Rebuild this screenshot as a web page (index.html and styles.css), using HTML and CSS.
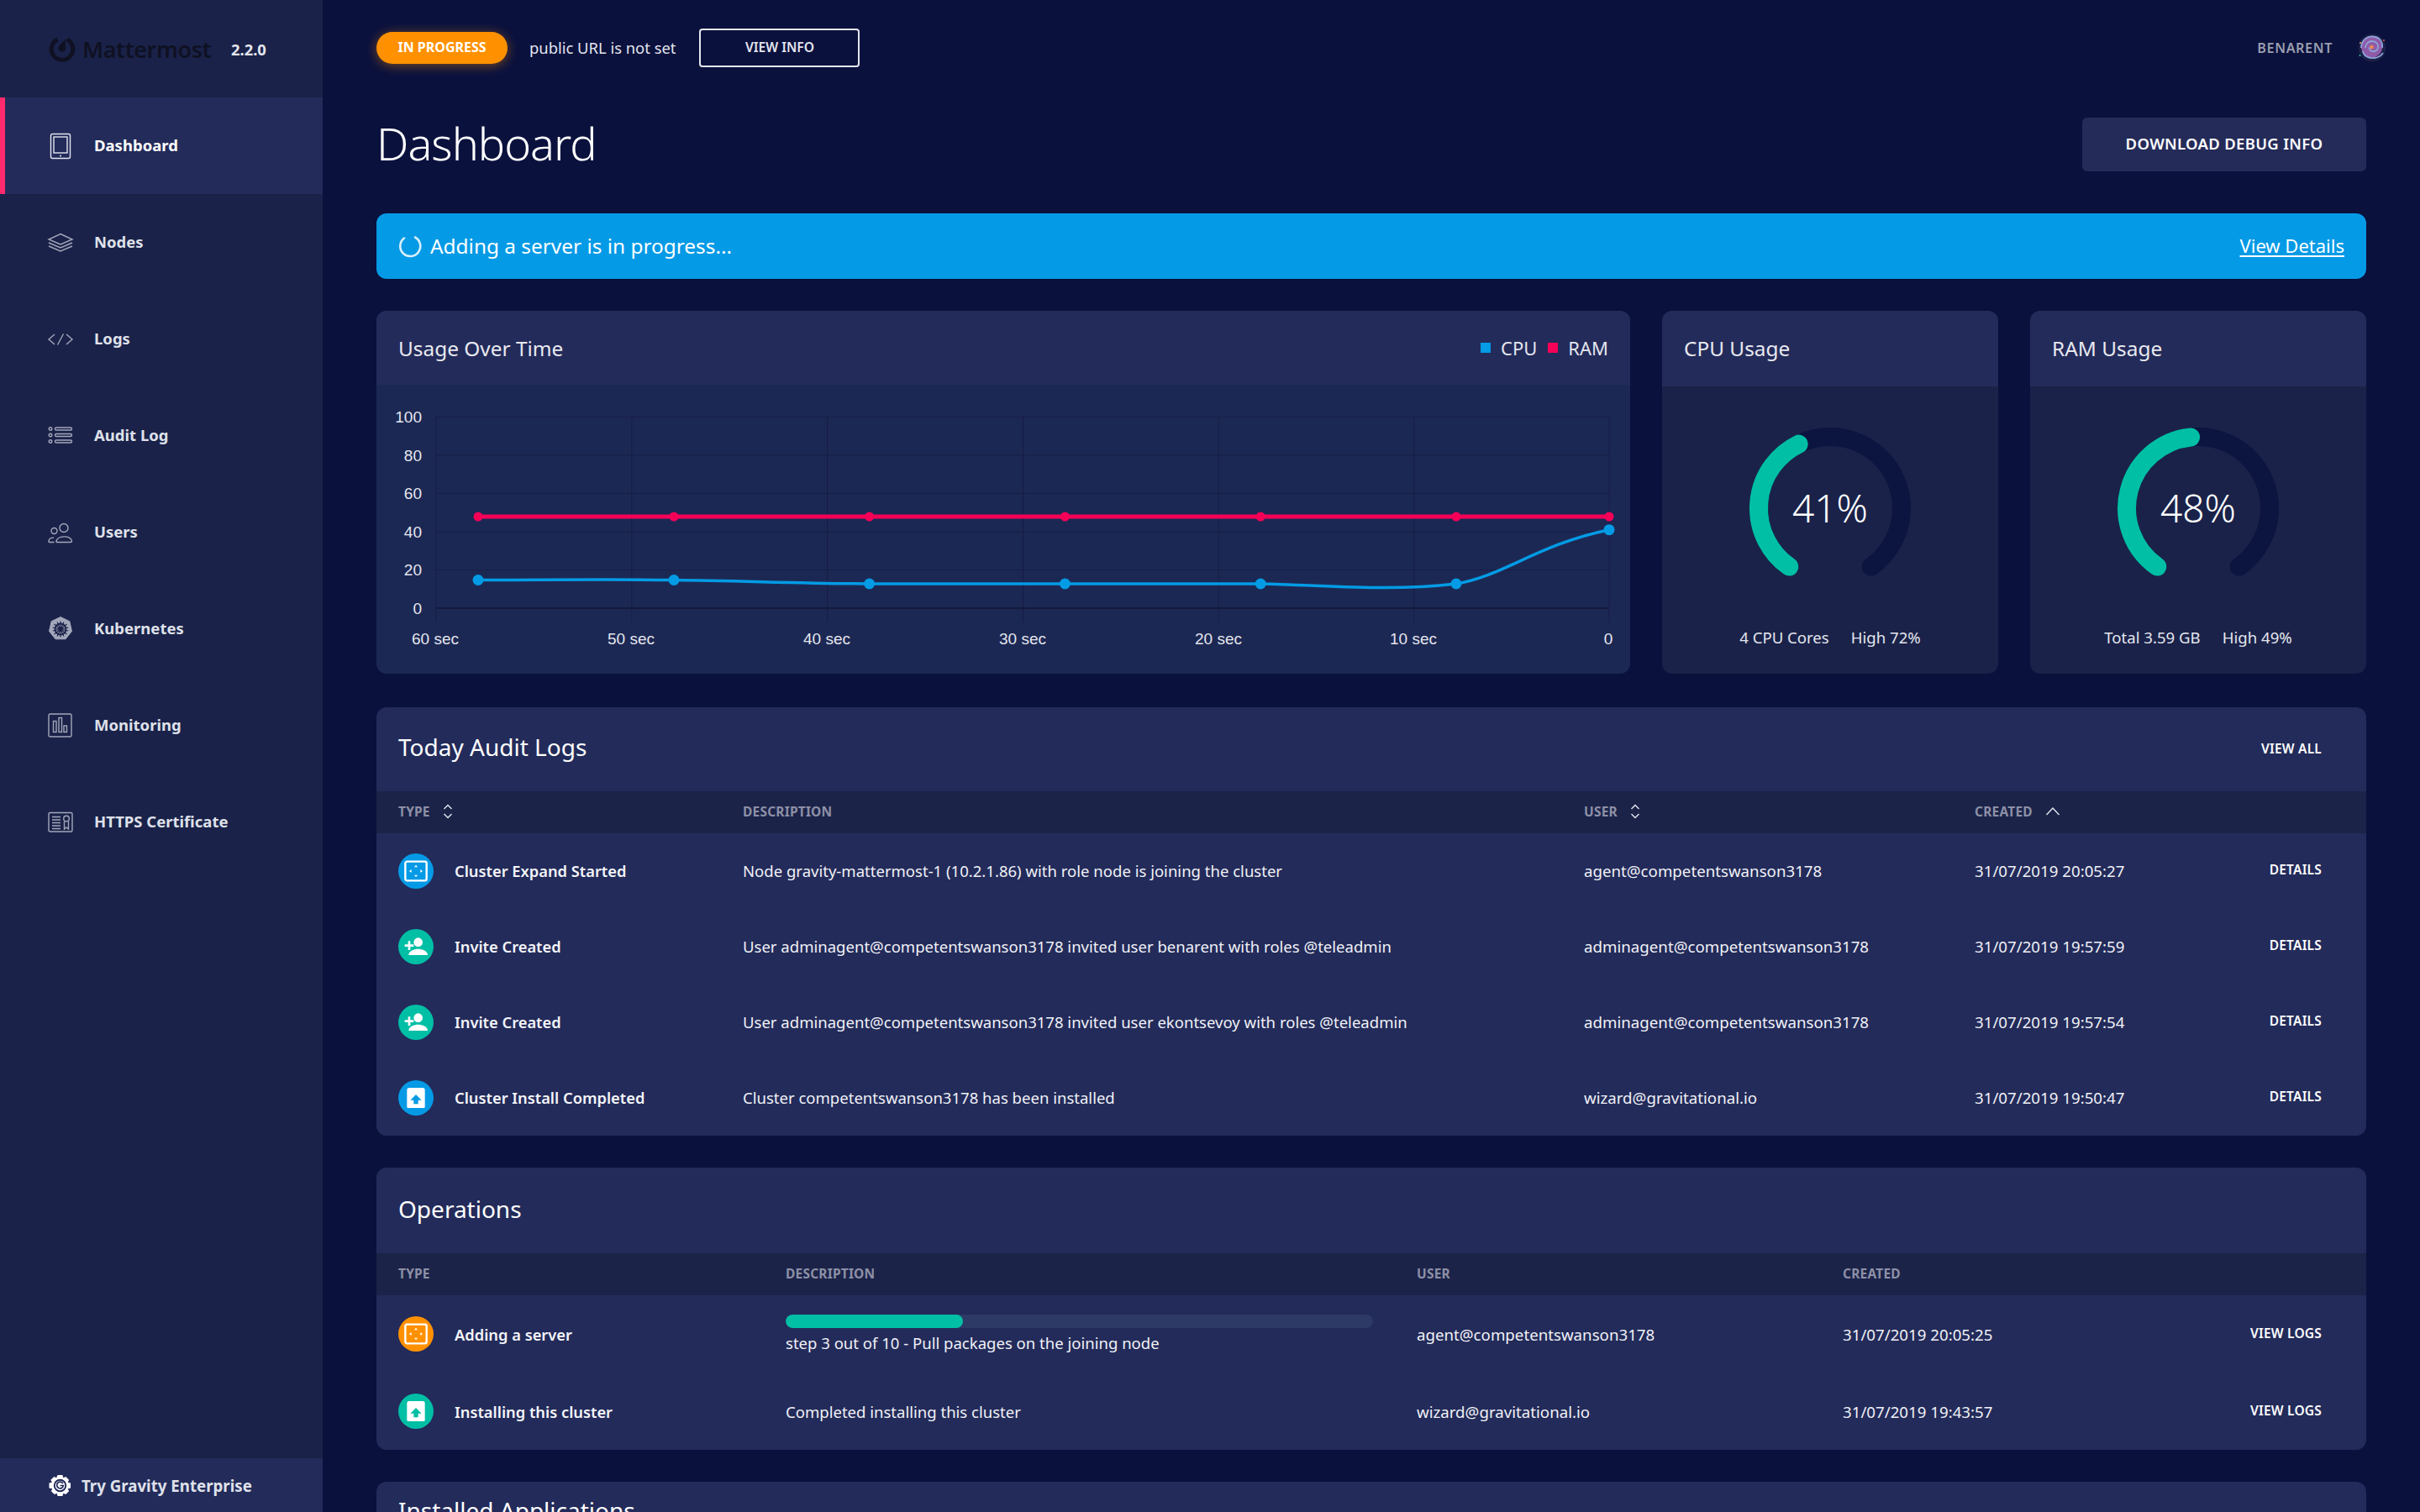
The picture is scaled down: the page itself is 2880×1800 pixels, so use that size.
FILE: index.html
```html
<!DOCTYPE html>
<html lang="en">
<head>
<meta charset="utf-8">
<title>Dashboard</title>
<link rel="stylesheet" href="styles.css">
</head>
<body>
<aside class="sidebar">
  <div class="brand">
    <svg class="brand-mark" viewBox="0 0 32 32"><path d="M10.500 5A12.800 12.800 0 1 0 21.500 5" fill="none" stroke="#0f1123" stroke-width="5"/><path d="M19.800 4.500L20 15.500a4.300 4.300 0 1 1-8-2.200c1.500-2.500 5-5.500 7.800-8.800Z" fill="#0f1123"/></svg>
    <span class="brand-name">Mattermost</span>
    <span class="brand-version">2.2.0</span>
  </div>
  <nav class="nav">
    <a class="nav-item active"><svg class="nav-icon" viewBox="0 0 30 30"><rect x="3.500" y="0.500" width="23" height="29" rx="2" class="st"/><rect x="7" y="4" width="16" height="19" class="st"/><path d="M14 26.500h2" class="st"/></svg>Dashboard</a>
    <a class="nav-item"><svg class="nav-icon" viewBox="0 0 30 30"><path d="M15 4.500L29 11 15 17 1 11Z" class="st"/><path d="M1 15l14 6 14-6M1 19l14 6 14-6" class="st"/></svg>Nodes</a>
    <a class="nav-item"><svg class="nav-icon" viewBox="0 0 30 30"><path d="M8 9l-7 6 7 6M22 9l7 6-7 6M18.500 8.500l-7 13" class="st"/></svg>Logs</a>
    <a class="nav-item"><svg class="nav-icon" viewBox="0 0 30 30"><circle cx="3" cy="6.500" r="1.800" class="st"/><circle cx="3" cy="14" r="1.800" class="st"/><circle cx="3" cy="21.500" r="1.800" class="st"/><rect x="8.500" y="5" width="20" height="3" rx="1.500" class="st"/><rect x="8.500" y="12.500" width="20" height="3" rx="1.500" class="st"/><rect x="8.500" y="20" width="20" height="3" rx="1.500" class="st"/></svg>Audit Log</a>
    <a class="nav-item"><svg class="nav-icon" viewBox="0 0 30 30"><circle cx="19" cy="9.500" r="5" class="st"/><circle cx="7.500" cy="13" r="3.500" class="st"/><path d="M10 26c0-8 18-8 18.500-1 0 1-.5 1.500-1.500 1.500H11c-.5 0-1-.2-1-.5ZM7.500 26.500H2c-1 0-1.500-.8-1-2 .8-2.200 3.500-3.500 6-3.300" class="st"/></svg>Users</a>
    <a class="nav-item"><svg class="nav-icon" viewBox="0 0 30 30"><path d="M15 .5l10.800 5.200 2.700 11.700-7.500 9.400H9l-7.500-9.400L4.200 5.700Z" fill="#a3a7ba" stroke="#a3a7ba" stroke-linejoin="round"/><circle cx="15" cy="15" r="6.500" fill="none" stroke="#1a2249" stroke-width="1.800"/><circle cx="15" cy="15" r="1.800" fill="#1a2249"/><path d="M15 5.500v19M7.500 9l15 12M22.500 9l-15 12M5.800 17l18.400-4M24.200 17L5.800 13M11 23.500l8-17M19 23.500l-8-17" stroke="#1a2249" stroke-width="1.100"/></svg>Kubernetes</a>
    <a class="nav-item"><svg class="nav-icon" viewBox="0 0 30 30"><rect x="1" y="1" width="27" height="27" rx="1.500" class="st"/><rect x="6.500" y="9.500" width="3.500" height="13" class="st"/><rect x="13" y="5.500" width="3.500" height="17" class="st"/><rect x="19" y="15" width="3.500" height="7.500" class="st"/></svg>Monitoring</a>
    <a class="nav-item"><svg class="nav-icon" viewBox="0 0 30 30"><rect x="1" y="3.500" width="28" height="22.500" rx="1.500" class="st"/><path d="M5 8.500h10M5 12h10M5 15.500h10M5 19h10M5 22.500h10" class="st"/><circle cx="22" cy="10.500" r="3.300" class="st"/><path d="M19.500 14v9l2.500-2 2.500 2v-9" class="st"/></svg>HTTPS Certificate</a>
  </nav>
  <a class="try">
    <svg class="try-icon" viewBox="0 0 28 28"><path d="M11 1h6l1 3.500 3-1.500 4 4-1.500 3 3.500 1v6l-3.500 1 1.500 3-4 4-3-1.500-1 3.500h-6l-1-3.500-3 1.500-4-4 1.500-3L.500 17v-6L4 10 2.500 7l4-4 3 1.500Z" fill="#fff"/><circle cx="14" cy="14" r="7" fill="none" stroke="#232b5a" stroke-width="2"/><path d="M17.500 11.500A4 4 0 1 0 18 14h-4" fill="none" stroke="#232b5a" stroke-width="1.800"/></svg>
    Try Gravity Enterprise
  </a>
</aside>

<main class="main">
  <header class="topbar">
    <span class="pill">IN PROGRESS</span>
    <span class="url-note">public URL is not set</span>
    <a class="outline-btn">VIEW INFO</a>
    <span class="user-name">BENARENT</span>
    <svg class="avatar" viewBox="0 0 34 34"><circle cx="17" cy="17" r="16.500" fill="#1b2148"/><circle cx="16.500" cy="16" r="12.500" fill="#8f5ba8"/><path d="M4 17C4 8 11 3 18 3.500 26 4 30 10 29 17M6 21c1 6 8 9 14 8 5-.8 8-3 10-6M9 17c0-5 4-8 8-8 5 0 8 4 7 8-1 3-4 5-7 4-3-.6-4-3-3-5" fill="none" stroke="#8ea3d8" stroke-width="1.800"/><circle cx="16.500" cy="16" r="2.200" fill="#f08a4b"/><circle cx="2.500" cy="26" r="1" fill="#2fc48d"/><circle cx="31" cy="8" r="1" fill="#e2574c"/><circle cx="3" cy="11" r="1" fill="#e6a23c"/></svg>
  </header>

  <div class="title-row">
    <h1 class="page-title">Dashboard</h1>
    <a class="solid-btn">DOWNLOAD DEBUG INFO</a>
  </div>

  <div class="alert">
    <svg class="spinner" viewBox="0 0 28 28"><path d="M7 4.500A12 12 0 1 0 20 3.500" fill="none" stroke="#d9effb" stroke-width="2.600" stroke-linecap="round"/></svg>
    <span class="alert-text">Adding a server is in progress...</span>
    <a class="alert-link">View Details</a>
  </div>

  <section class="stats">
    <div class="card chart-card">
      <div class="chart-head">
        <span class="card-title">Usage Over Time</span>
        <span class="legend"><i class="swatch cpu"></i>CPU<i class="swatch ram"></i>RAM</span>
      </div>
      <svg class="chart" viewBox="448 458 1492 344">
        <g class="grid">
          <path d="M519 496.500H1915M519 542H1915M519 587.500H1915M519 633H1915M519 678.500H1915"/>
          <path d="M519 496.500V741M751.800 496.500V741M984.600 496.500V741M1217.400 496.500V741M1450.200 496.500V741M1683 496.500V741M1915 496.500V741"/>
        </g>
        <path class="axis" d="M519 724H1915"/>
        <g class="tick-y">
          <text x="502" y="503">100</text><text x="502" y="548.500">80</text><text x="502" y="594">60</text><text x="502" y="639.500">40</text><text x="502" y="685">20</text><text x="502" y="730.500">0</text>
        </g>
        <g class="tick-x">
          <text x="518" y="767">60 sec</text><text x="751" y="767">50 sec</text><text x="984" y="767">40 sec</text><text x="1217" y="767">30 sec</text><text x="1450" y="767">20 sec</text><text x="1682" y="767">10 sec</text><text x="1914" y="767">0</text>
        </g>
        <path class="line-ram" d="M569 615H1915"/>
        <g class="dot-ram"><circle cx="569" cy="615" r="5.500"/><circle cx="802" cy="615" r="5.500"/><circle cx="1034.600" cy="615" r="5.500"/><circle cx="1267.400" cy="615" r="5.500"/><circle cx="1500.200" cy="615" r="5.500"/><circle cx="1733" cy="615" r="5.500"/><circle cx="1915" cy="615" r="5.500"/></g>
        <path class="line-cpu" d="M569 690.500C646 690.500 725 689.500 802 690.500C880 691.500 957 694.500 1034.600 695C1112 695.500 1190 694.500 1267.400 695C1345 695 1422 694.500 1500.200 695C1580 696.500 1650 704.500 1733 695C1790 685.500 1830 648 1915 630.700"/>
        <g class="dot-cpu"><circle cx="569" cy="690.500" r="6.500"/><circle cx="802" cy="690.500" r="6.500"/><circle cx="1034.600" cy="695" r="6.500"/><circle cx="1267.400" cy="695" r="6.500"/><circle cx="1500.200" cy="695" r="6.500"/><circle cx="1733" cy="695" r="6.500"/><circle cx="1915" cy="630.700" r="6.500"/></g>
      </svg>
    </div>

    <div class="card gauge-card">
      <div class="gauge-head"><span class="card-title">CPU Usage</span></div>
      <div class="gauge-body">
        <svg class="gauge" viewBox="-105 -105 210 210">
          <path class="track" d="M-48.750 69.600A85 85 0 1 1 48.750 69.600"/>
          <path class="value" d="M-48.750 69.600A85 85 0 0 1 -37.300 -76.400"/>
          <text class="gauge-num" x="0" y="17">41%</text>
        </svg>
        <div class="gauge-stats"><span>4 CPU Cores</span><span>High 72%</span></div>
      </div>
    </div>

    <div class="card gauge-card">
      <div class="gauge-head"><span class="card-title">RAM Usage</span></div>
      <div class="gauge-body">
        <svg class="gauge" viewBox="-105 -105 210 210">
          <path class="track" d="M-48.750 69.600A85 85 0 1 1 48.750 69.600"/>
          <path class="value" d="M-48.750 69.600A85 85 0 0 1 -8.900 -84.500"/>
          <text class="gauge-num" x="0" y="17">48%</text>
        </svg>
        <div class="gauge-stats"><span>Total 3.59 GB</span><span>High 49%</span></div>
      </div>
    </div>
  </section>

  <section class="card table-card audit">
    <div class="table-head"><h2 class="section-title">Today Audit Logs</h2><a class="action">VIEW ALL</a></div>
    <div class="row th audit-cols">
      <span class="sort">TYPE <svg class="sort-icon" viewBox="0 0 12 18"><path d="M1.500 6L6 1.500 10.500 6M1.500 12L6 16.500 10.500 12"/></svg></span>
      <span>DESCRIPTION</span>
      <span class="sort">USER <svg class="sort-icon" viewBox="0 0 12 18"><path d="M1.500 6L6 1.500 10.500 6M1.500 12L6 16.500 10.500 12"/></svg></span>
      <span class="sort">CREATED <svg class="sort-icon wide" viewBox="0 0 18 12"><path d="M1.500 10L9 2l7.500 8"/></svg></span>
      <span></span>
    </div>
    <div class="row audit-cols">
      <span class="type"><i class="badge blue"><svg viewBox="0 0 24 24"><rect x="2.500" y="3.500" width="19" height="17" rx="1.500" class="ic-st"/><path d="M12 6.500l1.500 2h-3ZM12 17.500l-1.500-2h3ZM6 12l2-1.500v3ZM18 12l-2 1.500v-3Z" class="ic-f"/></svg></i>Cluster Expand Started</span>
      <span class="desc">Node gravity-mattermost-1 (10.2.1.86) with role node is joining the cluster</span>
      <span>agent@competentswanson3178</span><span>31/07/2019 20:05:27</span><a class="action">DETAILS</a>
    </div>
    <div class="row audit-cols">
      <span class="type"><i class="badge green"><svg viewBox="0 0 24 24"><circle cx="14" cy="8" r="4" class="ic-f"/><path d="M5.500 19.500c0-4 5-5.500 8.500-5.500s8.500 1.500 8.500 5.500ZM5 7v3H2v2h3v3h2v-3h3v-2H7V7Z" class="ic-f"/></svg></i>Invite Created</span>
      <span class="desc">User adminagent@competentswanson3178 invited user benarent with roles @teleadmin</span>
      <span>adminagent@competentswanson3178</span><span>31/07/2019 19:57:59</span><a class="action">DETAILS</a>
    </div>
    <div class="row audit-cols">
      <span class="type"><i class="badge green"><svg viewBox="0 0 24 24"><circle cx="14" cy="8" r="4" class="ic-f"/><path d="M5.500 19.500c0-4 5-5.500 8.500-5.500s8.500 1.500 8.500 5.500ZM5 7v3H2v2h3v3h2v-3h3v-2H7V7Z" class="ic-f"/></svg></i>Invite Created</span>
      <span class="desc">User adminagent@competentswanson3178 invited user ekontsevoy with roles @teleadmin</span>
      <span>adminagent@competentswanson3178</span><span>31/07/2019 19:57:54</span><a class="action">DETAILS</a>
    </div>
    <div class="row audit-cols">
      <span class="type"><i class="badge blue"><svg viewBox="0 0 24 24"><path d="M4 5a2 2 0 0 1 2-2h12a2 2 0 0 1 2 2V20a1 1 0 0 1-1 1H5a1 1 0 0 1-1-1Z" class="ic-f"/><path d="M12 9l5 5h-3v3.500h-4V14H7Z" fill="#039be5"/></svg></i>Cluster Install Completed</span>
      <span class="desc">Cluster competentswanson3178 has been installed</span>
      <span>wizard@gravitational.io</span><span>31/07/2019 19:50:47</span><a class="action">DETAILS</a>
    </div>
  </section>

  <section class="card table-card ops">
    <div class="table-head ops-head"><h2 class="section-title">Operations</h2></div>
    <div class="row th ops-cols"><span>TYPE</span><span>DESCRIPTION</span><span>USER</span><span>CREATED</span><span></span></div>
    <div class="row ops-row ops-cols">
      <span class="type"><i class="badge orange"><svg viewBox="0 0 24 24"><rect x="2.500" y="3.500" width="19" height="17" rx="1.500" class="ic-st"/><path d="M12 6.500l1.500 2h-3ZM12 17.500l-1.500-2h3ZM6 12l2-1.500v3ZM18 12l-2 1.500v-3Z" class="ic-f"/></svg></i>Adding a server</span>
      <span class="progress-cell desc"><span class="progress"><i class="progress-fill"></i></span><span>step 3 out of 10 - Pull packages on the joining node</span></span>
      <span>agent@competentswanson3178</span><span>31/07/2019 20:05:25</span><a class="action">VIEW LOGS</a>
    </div>
    <div class="row ops-row ops-cols">
      <span class="type"><i class="badge green"><svg viewBox="0 0 24 24"><path d="M4 5a2 2 0 0 1 2-2h12a2 2 0 0 1 2 2V20a1 1 0 0 1-1 1H5a1 1 0 0 1-1-1Z" class="ic-f"/><path d="M12 9l5 5h-3v3.500h-4V14H7Z" fill="#00bfa5"/></svg></i>Installing this cluster</span>
      <span class="desc">Completed installing this cluster</span>
      <span>wizard@gravitational.io</span><span>31/07/2019 19:43:57</span><a class="action">VIEW LOGS</a>
    </div>
  </section>

  <section class="card table-card apps">
    <div class="table-head apps-head"><h2 class="section-title">Installed Applications</h2></div>
  </section>
</main>
</body>
</html>
```

FILE: styles.css
```css
* { box-sizing: border-box; }
html, body { margin: 0; height: 1800px; overflow: hidden; }
body {
  display: flex;
  background: #0a113d;
  color: #fff;
  font-family: "Noto Sans", "Open Sans", sans-serif;
  font-size: 18px;
}
a { color: inherit; text-decoration: none; }
h1, h2 { margin: 0; font-weight: 400; }

/* sidebar */
.sidebar {
  width: 384px;
  flex: none;
  height: 1800px;
  display: flex;
  flex-direction: column;
  background: #1a2249;
}
.brand {
  height: 116px;
  flex: none;
  display: flex;
  align-items: center;
  padding-left: 58px;
}
.brand-mark { width: 32px; height: 32px; flex: none; }
.brand-name { margin-left: 8px; width: 177px; flex: none; font-size: 27px; font-weight: 600; color: #0f1123; letter-spacing: -0.4px; }
.brand-version { font-size: 18.4px; font-weight: 700; color: #e4e6ee; }
.nav { display: flex; flex-direction: column; }
.nav-item {
  height: 115px;
  display: flex;
  align-items: center;
  gap: 25px;
  padding-left: 57px;
  padding-bottom: 3px;
  font-size: 18.5px;
  font-weight: 700;
  color: #dfe1ea;
}
.nav-item.active { background: #232b5a; box-shadow: inset 6px 0 0 #ff2a6d; color: #fff; }
.nav-icon { width: 30px; height: 30px; flex: none; overflow: visible; margin-top: 3px; }
.st { fill: none; stroke: #a3a7ba; stroke-width: 1.4; }
.active .st { stroke: #e4e6ee; }
.try {
  margin-top: auto;
  height: 64px;
  flex: none;
  display: flex;
  align-items: center;
  gap: 12px;
  padding-left: 58px;
  background: #232b5a;
  font-size: 18.7px;
  font-weight: 700;
  color: #dfe1ea;
}
.try-icon { width: 27px; height: 27px; }

/* main */
.main { flex: 1; min-width: 0; padding: 0 64px; }
.topbar { height: 114px; display: flex; align-items: center; }
.pill {
  height: 38px;
  width: 156px;
  display: flex;
  align-items: center;
  justify-content: center;
  padding-bottom: 2px;
  border-radius: 19px;
  background: #ff9100;
  box-shadow: 0 2px 14px rgba(255, 145, 0, 0.45);
  font-size: 16px;
  font-weight: 700;
}
.url-note { margin-left: 26px; margin-bottom: 2px; font-size: 18.4px; color: #e4e6ee; }
.outline-btn {
  margin-left: 28px;
  width: 191px;
  height: 46px;
  display: flex;
  align-items: center;
  justify-content: center;
  padding-bottom: 2px;
  border: 2px solid #e4e6ee;
  border-radius: 4px;
  font-size: 15.6px;
  font-weight: 600;
  color: #e4e6ee;
}
.user-name { margin-left: auto; font-size: 16.2px; font-weight: 600; letter-spacing: 0.6px; color: #9a9eb0; }
.avatar { width: 34px; height: 34px; margin-left: 30px; margin-right: -24px; }

.title-row { height: 140px; display: flex; align-items: flex-start; justify-content: space-between; padding-top: 26px; }
.page-title { font-size: 54px; font-weight: 300; line-height: 60px; letter-spacing: -1px; }
.solid-btn {
  width: 338px;
  height: 64px;
  display: flex;
  align-items: center;
  justify-content: center;
  padding-bottom: 4px;
  border-radius: 6px;
  background: #242b59;
  font-size: 18.5px;
  font-weight: 600;
  letter-spacing: 0.3px;
}
.alert {
  height: 78px;
  display: flex;
  align-items: center;
  padding: 0 26px;
  border-radius: 12px;
  background: #059ae6;
  font-size: 24.4px;
}
.spinner { width: 28px; height: 28px; margin-right: 10px; }
.alert-text { margin-bottom: 2px; }
.alert-link { margin-left: auto; margin-bottom: 2px; font-size: 22px; text-decoration: underline; text-underline-offset: 3px; }

.card { border-radius: 12px; overflow: hidden; background: #232b5a; }
.stats { display: flex; gap: 38px; margin-top: 38px; height: 432px; }
.chart-card { width: 1492px; flex: none; background: #1c2854; }
.chart-head {
  height: 88px;
  display: flex;
  align-items: center;
  justify-content: space-between;
  padding: 0 26px;
  background: #232b5a;
}
.card-title { font-size: 24.4px; color: #e8e9f0; }
.gauge-head .card-title { margin-bottom: 2px; }
.legend { display: flex; align-items: center; font-size: 22px; color: #e4e6ee; }
.swatch { width: 12px; height: 12px; margin-right: 12px; }
.swatch.cpu { background: #039be5; }
.swatch.ram { background: #f50057; margin-left: 13px; }
.chart { display: block; width: 1492px; height: 344px; }
.grid path { fill: none; stroke: #161d45; stroke-width: 1; }
.axis { stroke: #131a3e; stroke-width: 2; }
.tick-y text, .tick-x text { font-family: "Liberation Sans", sans-serif; font-size: 19px; fill: #e4e6ee; }
.tick-y text { text-anchor: end; }
.tick-x text { text-anchor: middle; }
.line-ram { fill: none; stroke: #f50057; stroke-width: 5; }
.line-cpu { fill: none; stroke: #039be5; stroke-width: 3.5; }
.dot-ram { fill: #f50057; }
.dot-cpu { fill: #039be5; }

.gauge-card { width: 400px; flex: none; background: #1a2249; display: flex; flex-direction: column; }
.gauge-head { height: 90px; flex: none; display: flex; align-items: center; padding: 0 26px; background: #232b5a; }
.gauge-body { flex: 1; display: flex; flex-direction: column; align-items: center; padding-top: 40px; }
.gauge { width: 210px; height: 210px; display: block; }
.track { fill: none; stroke: #0c1440; stroke-width: 22; stroke-linecap: round; }
.value { fill: none; stroke: #00bfa5; stroke-width: 22; stroke-linecap: round; }
.gauge-num { font-size: 46px; font-weight: 300; fill: #fff; text-anchor: middle; }
.gauge-stats { margin-top: 37px; display: flex; gap: 26px; font-size: 18.6px; line-height: 24px; color: #e4e6ee; }

.table-card { background: #232b5a; }
.audit { margin-top: 40px; height: 510px; }
.ops { margin-top: 38px; height: 336px; }
.apps { margin-top: 38px; height: 200px; }
.table-head {
  height: 100px;
  display: flex;
  align-items: center;
  justify-content: space-between;
  padding: 0 53px 0 26px;
}
.ops-head { height: 102px; }
.apps-head { height: 72px; }
.section-title { font-size: 28px; color: #fff; margin-bottom: 4px; }
.audit .section-title { margin-bottom: 6px; }
.action { margin-bottom: 2px; font-size: 15.5px; font-weight: 600; text-align: right; letter-spacing: 0.2px; color: #fff; }
.row { display: grid; align-items: center; height: 90px; padding: 0 53px 2px 26px; font-size: 18.7px; color: #f0f1f6; }
.audit-cols { grid-template-columns: 410px 1001px 465px 1fr 110px; }
.ops-cols { grid-template-columns: 461px 751px 507px 1fr 120px; }
.ops-row { height: 92px; padding-bottom: 0; }
.desc { font-size: 18.55px; }
.th { height: 50px; padding-bottom: 2px; background: #1b2349; font-size: 15.5px; font-weight: 700; letter-spacing: 0.2px; color: #8d90a6; }
.sort { display: flex; align-items: center; gap: 15px; }
.sort-icon { width: 12px; height: 18px; fill: none; stroke: #e4e6ee; stroke-width: 1.4; }
.sort-icon.wide { width: 18px; height: 12px; }
.type { display: flex; align-items: center; gap: 25px; font-size: 18.3px; font-weight: 600; color: #f4f5f9; }
.badge { width: 42px; height: 42px; margin-top: 2px; border-radius: 50%; flex: none; display: flex; align-items: center; justify-content: center; }
.ops-row .badge { margin-top: 0; }
.badge svg { width: 32px; height: 32px; }
.blue { background: #059ae6; }
.green { background: #00bfa5; }
.orange { background: #ff9100; }
.ic-st { fill: none; stroke: #fff; stroke-width: 1.8; }
.ic-f { fill: #fff; }
.progress-cell { display: flex; flex-direction: column; gap: 5px; }
.progress { display: block; width: 699px; height: 16px; border-radius: 8px; background: #2d3a66; overflow: hidden; }
.progress-fill { display: block; width: 211px; height: 16px; border-radius: 8px; background: #00bfa5; }
```
